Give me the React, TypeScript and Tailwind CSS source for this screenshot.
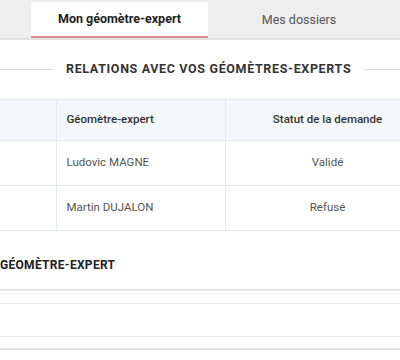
import React from 'react';

const rows = [
  { name: 'Ludovic MAGNE', status: 'Validé' },
  { name: 'Martin DUJALON', status: 'Refusé' },
];

const App: React.FC = () => {
  return (
    <div className="w-[400px] h-[360px] overflow-hidden bg-white font-['Roboto',sans-serif]">
      {/* Tabs */}
      <div className="h-[40px] bg-[#eeeeee] border-b-2 border-[#e2e2e2] flex pl-[31px] pt-[2px]">
        <div className="w-[177px] h-[36px] bg-white border-b-2 border-[#df8a90] flex items-center justify-center text-[12.5px] font-bold text-[#222]">
          Mon géomètre-expert
        </div>
        <div className="w-[182px] h-[36px] flex items-center justify-center text-[12.5px] text-[#555]">
          Mes dossiers
        </div>
      </div>

      {/* Section title */}
      <div className="h-[59px] flex items-center">
        <div className="w-[53px] h-px bg-[#dcdcdc]" />
        <h2 className="mx-[13px] text-[12.5px] font-bold tracking-[0.65px] text-[#333]">
          RELATIONS AVEC VOS GÉOMÈTRES-EXPERTS
        </h2>
        <div className="flex-1 h-px bg-[#dcdcdc]" />
      </div>

      {/* Table */}
      <table className="w-[430px] border-collapse text-[11.5px] table-fixed">
        <colgroup>
          <col className="w-[56px]" />
          <col className="w-[169px]" />
          <col className="w-[205px]" />
        </colgroup>
        <thead>
          <tr className="h-[41px] bg-[#f4f8fb]">
            <th className="border border-[#e6e9ec] border-l-0" />
            <th className="border border-[#e6e9ec] text-left pl-[10px] font-medium text-[#333]">Géomètre-expert</th>
            <th className="border border-[#e6e9ec] text-center font-medium text-[#333]">Statut de la demande</th>
          </tr>
        </thead>
        <tbody>
          {rows.map((r) => (
            <tr key={r.name} className="h-[45px]">
              <td className="border border-[#e6e9ec] border-l-0" />
              <td className="border border-[#e6e9ec] pl-[10px] text-[#555]">{r.name}</td>
              <td className="border border-[#e6e9ec] text-center text-[#555]">{r.status}</td>
            </tr>
          ))}
        </tbody>
      </table>

      {/* Second section */}
      <div className="h-[58px] flex items-center">
        <h2 className="text-[12px] font-bold tracking-[0.3px] text-[#222] pt-[10px]">GÉOMÈTRE-EXPERT</h2>
      </div>
      <div className="border-t-2 border-[#e4e4e4]" />
      <div className="h-[2px]" />
      <div className="border-t border-[#f0f0f0]" />
      <div className="h-[9px]" />
      <div className="border-t border-[#e8e8e8]" />
      <div className="h-[32px]" />
      <div className="border-t border-[#ececec]" />
      <div className="h-[11px]" />
      <div className="border-t-2 border-[#e2e2e2]" />
    </div>
  );
};

export default App;
